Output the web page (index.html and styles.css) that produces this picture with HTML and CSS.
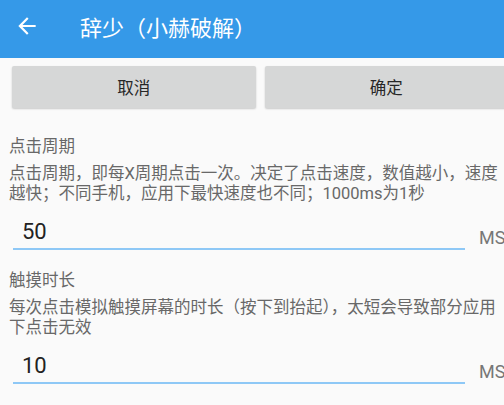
FILE: index.html
```html
<!DOCTYPE html>
<html lang="zh-CN">
<head>
    <meta charset="UTF-8">
    <meta name="viewport" content="width=device-width, initial-scale=1.0">
    <title>辞少（小赫破解）</title>
    <link rel="stylesheet" href="styles.css">
</head>
<body>
    <div class="page">
        <header class="toolbar">
            <a class="back" href="#">
                <svg width="26" height="26" viewBox="0 0 24 24">
                    <path fill="#fff" d="M20 11H7.83l5.59-5.59L12 4l-8 8 8 8 1.41-1.41L7.83 13H20v-2z"/>
                </svg>
            </a>
            <h1>辞少（小赫破解）</h1>
        </header>

        <div class="actions">
            <button type="button">取消</button>
            <button type="button">确定</button>
        </div>

        <section class="settings">
            <div class="item">
                <div class="item-title">点击周期</div>
                <p class="item-desc">点击周期，即每X周期点击一次。决定了点击速度，数值越小，速度越快；不同手机，应用下最快速度也不同；1000ms为1秒</p>
                <div class="field">
                    <input type="text" value="50">
                    <span class="unit">MS</span>
                </div>
            </div>

            <div class="item">
                <div class="item-title">触摸时长</div>
                <p class="item-desc">每次点击模拟触摸屏幕的时长（按下到抬起），太短会导致部分应用下点击无效</p>
                <div class="field">
                    <input type="text" value="10">
                    <span class="unit">MS</span>
                </div>
            </div>

            <div class="item">
                <div class="item-title">点击次数</div>
            </div>
        </section>
    </div>
</body>
</html>
```

FILE: styles.css
```css
html,
body {
    margin: 0;
    padding: 0;
    overflow: hidden;
    background-color: #fafafa;
    font-family: Roboto, "Noto Sans CJK SC", sans-serif;
}

.page {
    width: 520px;
}

.toolbar {
    height: 58px;
    box-sizing: border-box;
    padding-bottom: 6px;
    background-color: #3599e8;
    display: flex;
    align-items: center;
}

.back {
    display: flex;
    margin-left: 14px;
}

.toolbar h1 {
    margin: 0 0 0 40px;
    font-size: 22px;
    font-weight: normal;
    color: #fff;
    font-family: "Noto Sans CJK SC", sans-serif;
}

.actions {
    display: flex;
    gap: 9px;
    padding: 8px 12px 0;
}

.actions button {
    flex: 1;
    height: 42px;
    border: none;
    border-radius: 2px;
    background-color: #d6d7d7;
    box-shadow: 0 1px 2px rgba(0, 0, 0, 0.2);
    font-family: "Noto Sans CJK SC", sans-serif;
    font-size: 16.5px;
    color: #262626;
}

.settings {
    padding: 29px 9px 0;
}

.item {
    margin-bottom: 21px;
}

.item-title {
    font-size: 16.5px;
    line-height: 20px;
    color: #686868;
}

.item-desc {
    margin: 7px 0 0;
    font-size: 16.5px;
    line-height: 20px;
    color: #686868;
}

.field {
    display: flex;
    align-items: flex-end;
    margin-top: 10px;
}

.field input {
    width: 452px;
    height: 36px;
    margin-left: 4px;
    padding: 0 0 0 9px;
    box-sizing: border-box;
    border: none;
    border-bottom: 2px solid #8ec8f6;
    background: transparent;
    font-family: Roboto, sans-serif;
    font-size: 22px;
    color: #222;
    outline: none;
}

.unit {
    margin-left: 14px;
    margin-bottom: 2px;
    font-size: 18px;
    line-height: 20px;
    color: #777;
}
```
